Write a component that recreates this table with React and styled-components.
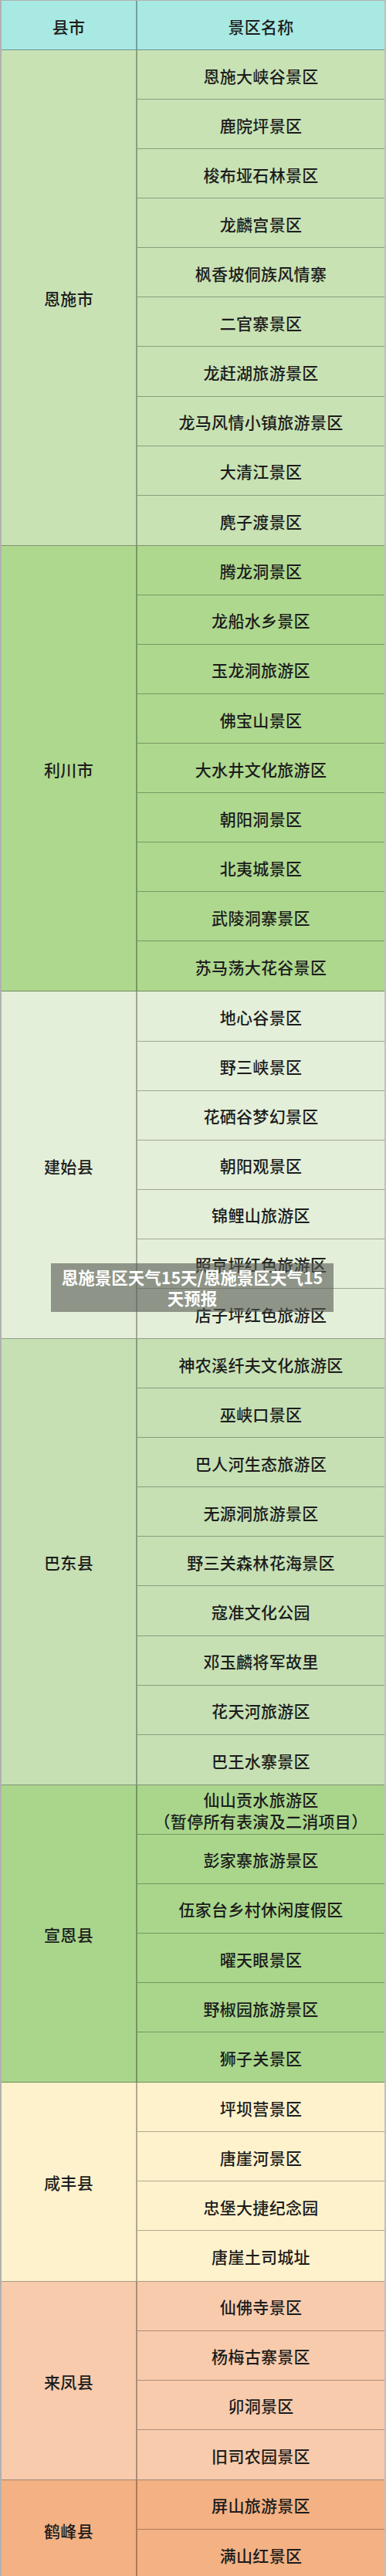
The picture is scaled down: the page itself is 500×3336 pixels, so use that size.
import React from "react";
import styled, { createGlobalStyle } from "styled-components";

const Global = createGlobalStyle`
  html, body { margin: 0; padding: 0; background: #ffffff; }
  body { font-family: "Noto Sans CJK SC", "Noto Sans", sans-serif; }
`;

const Page = styled.div`
  position: relative;
  width: 500px;
  padding-bottom: 4px;
`;

const Sheet = styled.div`
  width: 500px;
  box-sizing: border-box;
  display: flex;
  flex-direction: column;
  border-top: 1px solid rgba(0, 0, 0, 0.3);
  border-left: 2px solid rgba(0, 0, 0, 0.3);
  border-right: 2px solid rgba(0, 0, 0, 0.25);
  color: #1c1c1c;
  font-size: 21px;
  font-weight: 500;
  letter-spacing: 0.3px;
`;

const Group = styled.div`
  display: grid;
  grid-template-columns: 176px 1fr;
  grid-auto-rows: 64.08px;
  background: ${(p) => p.$bg};
  border-bottom: 1.5px solid rgba(0, 0, 0, 0.35);
`;

const HeaderRow = styled(Group)`
  grid-auto-rows: 63px;
`;

const Cell = styled.div`
  display: flex;
  align-items: center;
  justify-content: center;
  text-align: center;
  box-sizing: border-box;
  line-height: 28px;
  padding-top: 2px;
`;

const CountyCell = styled(Cell)`
  grid-column: 1;
  grid-row: 1 / span ${(p) => p.$span};
  border-right: 2px solid rgba(0, 0, 0, 0.3);
`;

const SpotCell = styled(Cell)`
  grid-column: 2;
  padding-left: 4px;
  padding-right: 4px;
  border-bottom: ${(p) => (p.$last ? "none" : "1.5px solid rgba(0, 0, 0, 0.3)")};
`;

const Caption = styled.div`
  position: absolute;
  left: 66px;
  top: 1636px;
  width: 366px;
  height: 63px;
  box-sizing: border-box;
  padding: 4px 10px;
  background: rgba(85, 88, 82, 0.6);
  color: #ffffff;
  font-weight: 700;
  font-size: 21.5px;
  line-height: 27px;
  text-align: center;
`;

const groups = [
  {
    name: "恩施市",
    bg: "#c8e2b4",
    spots: [
      "恩施大峡谷景区",
      "鹿院坪景区",
      "梭布垭石林景区",
      "龙麟宫景区",
      "枫香坡侗族风情寨",
      "二官寨景区",
      "龙赶湖旅游景区",
      "龙马风情小镇旅游景区",
      "大清江景区",
      "麂子渡景区",
    ],
  },
  {
    name: "利川市",
    bg: "#aed88e",
    spots: [
      "腾龙洞景区",
      "龙船水乡景区",
      "玉龙洞旅游区",
      "佛宝山景区",
      "大水井文化旅游区",
      "朝阳洞景区",
      "北夷城景区",
      "武陵洞寨景区",
      "苏马荡大花谷景区",
    ],
  },
  {
    name: "建始县",
    bg: "#e3efd9",
    spots: [
      "地心谷景区",
      "野三峡景区",
      "花硒谷梦幻景区",
      "朝阳观景区",
      "锦鲤山旅游区",
      "照京坪红色旅游区",
      "店子坪红色旅游区",
    ],
  },
  {
    name: "巴东县",
    bg: "#c6e0b4",
    spots: [
      "神农溪纤夫文化旅游区",
      "巫峡口景区",
      "巴人河生态旅游区",
      "无源洞旅游景区",
      "野三关森林花海景区",
      "寇准文化公园",
      "邓玉麟将军故里",
      "花天河旅游区",
      "巴王水寨景区",
    ],
  },
  {
    name: "宣恩县",
    bg: "#a9d68b",
    spots: [
      ["仙山贡水旅游区", "（暂停所有表演及二消项目）"],
      "彭家寨旅游景区",
      "伍家台乡村休闲度假区",
      "曜天眼景区",
      "野椒园旅游景区",
      "狮子关景区",
    ],
  },
  {
    name: "咸丰县",
    bg: "#fef2cc",
    spots: ["坪坝营景区", "唐崖河景区", "忠堡大捷纪念园", "唐崖土司城址"],
  },
  {
    name: "来凤县",
    bg: "#f8cbad",
    spots: ["仙佛寺景区", "杨梅古寨景区", "卯洞景区", "旧司农园景区"],
  },
  {
    name: "鹤峰县",
    bg: "#f4b183",
    spots: ["屏山旅游景区", "满山红景区"],
  },
];

function SpotText({ value }) {
  if (Array.isArray(value)) {
    return (
      <span>
        {value[0]}
        <br />
        {value[1]}
      </span>
    );
  }
  return <span>{value}</span>;
}

export default function App() {
  return (
    <Page>
      <Global />
      <Sheet>
        <HeaderRow $bg="#a8e9e3">
          <CountyCell $span={1}>县市</CountyCell>
          <SpotCell $last>景区名称</SpotCell>
        </HeaderRow>
        {groups.map((g) => (
          <Group key={g.name} $bg={g.bg}>
            <CountyCell $span={g.spots.length}>{g.name}</CountyCell>
            {g.spots.map((s, i) => (
              <SpotCell key={i} $last={i === g.spots.length - 1}>
                <SpotText value={s} />
              </SpotCell>
            ))}
          </Group>
        ))}
      </Sheet>
      <Caption>恩施景区天气15天/恩施景区天气15天预报</Caption>
    </Page>
  );
}
